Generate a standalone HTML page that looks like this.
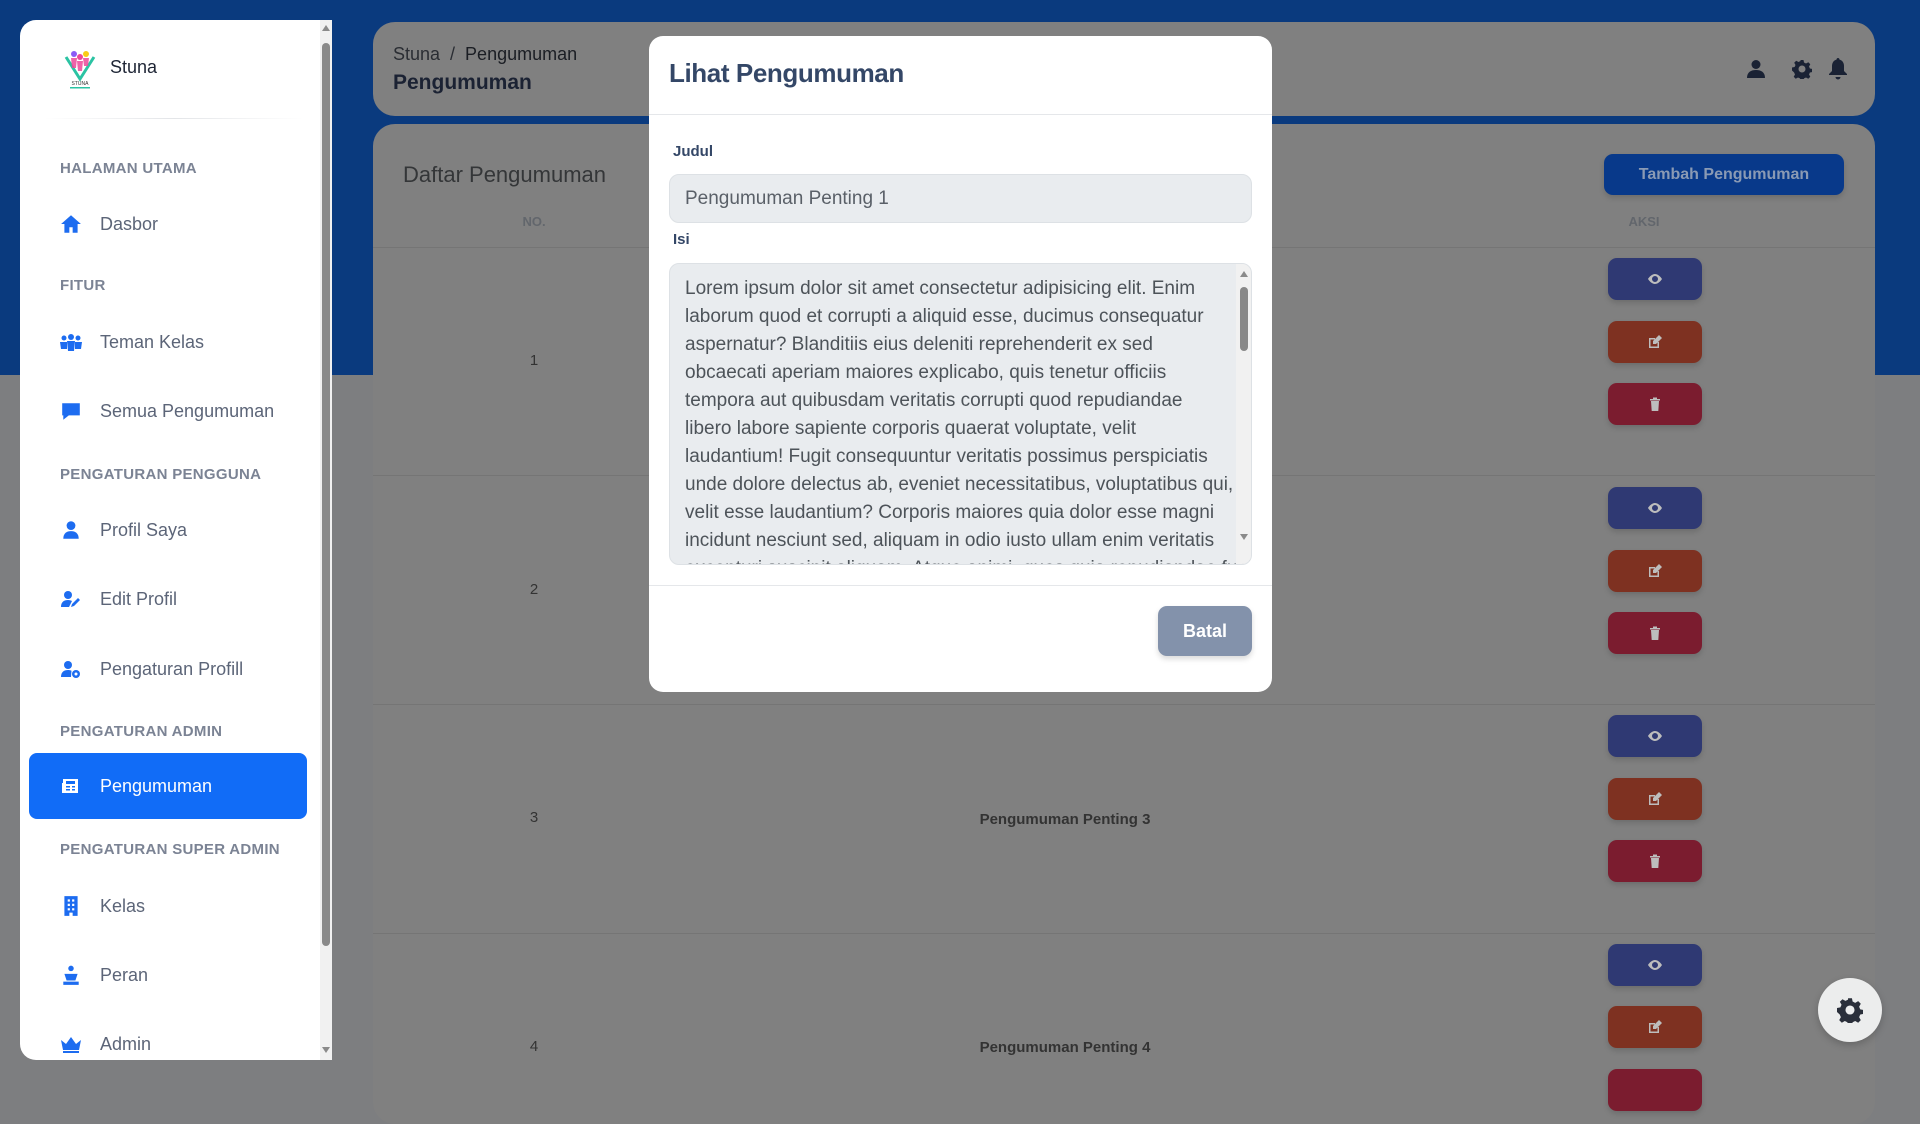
<!DOCTYPE html>
<html><head><meta charset="utf-8"><style>
*{box-sizing:border-box;margin:0;padding:0}
body{width:1920px;height:1080px;overflow:hidden;background:#7d7e80;font-family:"Liberation Sans",sans-serif;position:relative}
.band{position:absolute;left:0;top:0;width:1920px;height:375px;background:#0a3a7e}
.sb{position:absolute;left:20px;top:20px;width:312px;height:1040px;background:#fff;border-radius:16px 0 0 16px;overflow:hidden}
.sb .lab{position:absolute;left:40px;font-size:15px;font-weight:bold;color:#7b8394;letter-spacing:.3px}
.sb .it{position:absolute;left:40px;font-size:18px;color:#5c6578;display:flex;align-items:center}
.sb .it svg{width:22px;height:22px;margin-right:18px;fill:#1d6cf0}
.scroll{position:absolute;left:300px;top:0;width:12px;height:1040px;background:#f1f1f1}
.thumb{position:absolute;left:302px;top:23px;width:8px;height:903px;background:#8a8a8a;border-radius:4px}
.card{position:absolute;left:373px;width:1502px;background:#808080;border-radius:22px}
.ab{position:absolute;left:1608px;width:94px;height:42px;border-radius:9px;display:flex;align-items:center;justify-content:center;box-shadow:0 3px 6px rgba(0,0,0,.15)}
.ab svg{width:16px;height:16px;fill:#bdbdbd}
.num{position:absolute;left:524px;width:20px;text-align:center;font-size:15px;color:#333}
.ttl{position:absolute;left:900px;width:330px;text-align:center;font-size:15px;font-weight:bold;color:#333}
.sep{position:absolute;left:373px;width:1502px;height:1px;background:#757575}
.modal{position:absolute;left:649px;top:36px;width:623px;height:656px;background:#fff;border-radius:14px;overflow:hidden}
</style></head><body>
<div class="band"></div>

<div class="card" style="top:22px;height:94px">
 <div style="position:absolute;left:20px;top:22px;font-size:18px;color:#2a2d33">Stuna &nbsp;/&nbsp; <span style="color:#1b1e24">Pengumuman</span></div>
 <div style="position:absolute;left:20px;top:49px;font-size:21px;font-weight:bold;color:#1b2233">Pengumuman</div>
 <svg style="position:absolute;left:1373px;top:37px" width="20" height="20" viewBox="0 0 20 20" fill="#1a2234"><circle cx="10" cy="5.5" r="4.5"/><path d="M1 19c0-6 4-8 9-8s9 2 9 8z"/></svg>
 <svg style="position:absolute;left:1419px;top:37px" width="20" height="20" viewBox="0 0 20 20" fill="#1a2234"><path d="M8.5 1h3l.5 2.5 2 1 2.3-1.3 2 2-1.3 2.3.9 2 2.6.5v3l-2.6.5-.9 2 1.3 2.3-2 2-2.3-1.3-2 .9-.5 2.6h-3l-.5-2.6-2-.9-2.3 1.3-2-2 1.3-2.3-.9-2L0 11.5v-3l2.6-.5.9-2-1.3-2.3 2-2 2.3 1.3 2-1zM10 6.5a3.5 3.5 0 100 7 3.5 3.5 0 000-7z"/></svg>
 <svg style="position:absolute;left:1456px;top:36px" width="18" height="22" viewBox="0 0 18 22" fill="#1a2234"><path d="M9 0c1 0 1.5.7 1.5 1.6C13.5 2.3 15 5 15 8v5l3 3v1H0v-1l3-3V8c0-3 1.5-5.7 4.5-6.4C7.5.7 8 0 9 0zM6.5 19h5a2.5 2.5 0 01-5 0z"/></svg>
</div>

<div class="card" style="top:124px;height:1000px">
 <div style="position:absolute;left:30px;top:38px;font-size:22px;color:#343638">Daftar Pengumuman</div>
 <div style="position:absolute;left:1231px;top:30px;width:240px;height:41px;background:#08398a;border-radius:9px;color:#8a9ab4;font-weight:bold;font-size:16px;display:flex;align-items:center;justify-content:center;box-shadow:0 3px 6px rgba(0,0,0,.15)">Tambah Pengumuman</div>
 <div style="position:absolute;left:131px;top:90px;width:60px;text-align:center;font-size:13px;font-weight:bold;color:#62666c">NO.</div>
 <div style="position:absolute;left:1241px;top:90px;width:60px;text-align:center;font-size:13px;font-weight:bold;color:#62666c">AKSI</div>
</div>
<div class="sep" style="top:247px"></div>
<div class="sep" style="top:475px"></div>
<div class="sep" style="top:704px"></div>
<div class="sep" style="top:933px"></div>

<div class="num" style="top:352px">1</div>
<div class="num" style="top:581px">2</div>
<div class="num" style="top:809px">3</div>
<div class="num" style="top:1038px">4</div>
<div class="ttl" style="top:811px">Pengumuman Penting 3</div>
<div class="ttl" style="top:1039px">Pengumuman Penting 4</div>

<div class="ab" style="top:258px;background:#2f3973"><svg viewBox="0 0 16 16"><path d="M8 3C4 3 1 8 1 8s3 5 7 5 7-5 7-5-3-5-7-5zm0 8a3 3 0 110-6 3 3 0 010 6z"/></svg></div>
<div class="ab" style="top:321px;background:#7e3121"><svg viewBox="0 0 16 16"><path d="M2 4h6v1.5H3.5v7h7V8H12v6H2zM12 1l3 3-6 6H6V7z"/></svg></div>
<div class="ab" style="top:383px;background:#7b1c2f"><svg viewBox="0 0 16 16"><path d="M3 3h10v1.5H3zM6 1.5h4V3H6zM4 5h8l-.7 10H4.7z"/></svg></div>
<div class="ab" style="top:487px;background:#2f3973"><svg viewBox="0 0 16 16"><path d="M8 3C4 3 1 8 1 8s3 5 7 5 7-5 7-5-3-5-7-5zm0 8a3 3 0 110-6 3 3 0 010 6z"/></svg></div>
<div class="ab" style="top:550px;background:#7e3121"><svg viewBox="0 0 16 16"><path d="M2 4h6v1.5H3.5v7h7V8H12v6H2zM12 1l3 3-6 6H6V7z"/></svg></div>
<div class="ab" style="top:612px;background:#7b1c2f"><svg viewBox="0 0 16 16"><path d="M3 3h10v1.5H3zM6 1.5h4V3H6zM4 5h8l-.7 10H4.7z"/></svg></div>
<div class="ab" style="top:715px;background:#2f3973"><svg viewBox="0 0 16 16"><path d="M8 3C4 3 1 8 1 8s3 5 7 5 7-5 7-5-3-5-7-5zm0 8a3 3 0 110-6 3 3 0 010 6z"/></svg></div>
<div class="ab" style="top:778px;background:#7e3121"><svg viewBox="0 0 16 16"><path d="M2 4h6v1.5H3.5v7h7V8H12v6H2zM12 1l3 3-6 6H6V7z"/></svg></div>
<div class="ab" style="top:840px;background:#7b1c2f"><svg viewBox="0 0 16 16"><path d="M3 3h10v1.5H3zM6 1.5h4V3H6zM4 5h8l-.7 10H4.7z"/></svg></div>
<div class="ab" style="top:944px;background:#2f3973"><svg viewBox="0 0 16 16"><path d="M8 3C4 3 1 8 1 8s3 5 7 5 7-5 7-5-3-5-7-5zm0 8a3 3 0 110-6 3 3 0 010 6z"/></svg></div>
<div class="ab" style="top:1006px;background:#7e3121"><svg viewBox="0 0 16 16"><path d="M2 4h6v1.5H3.5v7h7V8H12v6H2zM12 1l3 3-6 6H6V7z"/></svg></div>
<div class="ab" style="top:1069px;background:#7b1c2f"></div>

<div class="sb">
 <svg style="position:absolute;left:44px;top:29px" width="32" height="40" viewBox="0 0 32 40"><path d="M2 8l14 22 14-22" fill="none" stroke="#2bc3a3" stroke-width="3"/><circle cx="10" cy="5" r="3" fill="#8b5cf6"/><circle cx="22" cy="5" r="3" fill="#facc15"/><circle cx="16" cy="8" r="3" fill="#ec4899"/><path d="M7 9h6l-1 10H8zM19 9h6l-1 8h-4zM13 12h6l-1 10h-4z" fill="#ec4899" opacity=".85"/><text x="16" y="36" font-size="5" text-anchor="middle" fill="#333" font-family="Liberation Sans">STUNA</text><rect x="6" y="38" width="20" height="1.5" fill="#2bc3a3"/></svg>
 <div style="position:absolute;left:90px;top:37px;font-size:18px;color:#1e2535">Stuna</div>
 <div style="position:absolute;left:24px;top:98px;width:260px;height:1px;background:linear-gradient(90deg,transparent,#e3e5e8,transparent)"></div>
 <div class="lab" style="top:140px">HALAMAN UTAMA</div>
 <div class="it" style="top:193px"><svg viewBox="0 0 20 20"><path d="M10 2l9 8h-3v8h-4.5v-5h-3v5H4v-8H1z"/></svg>Dasbor</div>
 <div class="lab" style="top:257px">FITUR</div>
 <div class="it" style="top:311px"><svg viewBox="0 0 22 20"><circle cx="4" cy="6" r="2.5"/><circle cx="11" cy="5" r="3"/><circle cx="18" cy="6" r="2.5"/><path d="M0 10h7v7H1zM15 10h7l-1 7h-6zM7 9h8l-1 10H8z"/></svg>Teman Kelas</div>
 <div class="it" style="top:380px"><svg viewBox="0 0 20 20"><path d="M2 3h16v11H8l-5 4v-4H2z"/></svg>Semua Pengumuman</div>
 <div class="lab" style="top:446px">PENGATURAN PENGGUNA</div>
 <div class="it" style="top:499px"><svg viewBox="0 0 20 20"><circle cx="10" cy="6" r="4"/><path d="M3 18c0-5 3-7 7-7s7 2 7 7z"/></svg>Profil Saya</div>
 <div class="it" style="top:568px"><svg viewBox="0 0 22 20"><circle cx="8" cy="6" r="4"/><path d="M1 18c0-5 3-7 7-7 2 0 3 .5 4 1l-3 6zM11 18l1-3 6-6 2 2-6 6z"/></svg>Edit Profil</div>
 <div class="it" style="top:638px"><svg viewBox="0 0 22 20"><circle cx="8" cy="6" r="4"/><path d="M1 18c0-5 3-7 7-7 1.5 0 2.5.3 3.5.7L11 18z"/><circle cx="16" cy="15" r="4"/><circle cx="16" cy="15" r="1.5" fill="#fff"/></svg>Pengaturan Profill</div>
 <div class="lab" style="top:703px">PENGATURAN ADMIN</div>
 <div style="position:absolute;left:9px;top:733px;width:278px;height:66px;background:#116cf7;border-radius:8px;display:flex;align-items:center;padding-left:31px;color:#fff;font-size:18px">
  <svg viewBox="0 0 20 20" width="20" height="20" style="margin-right:20px" fill="#fff"><path d="M3 3h15v14H2V7h1zm3 2v3h9V5zm0 5v1.5h4V10zm6 0v1.5h3V10zm-6 3v1.5h4V13zm6 0v1.5h3V13z"/></svg>Pengumuman</div>
 <div class="lab" style="top:821px">PENGATURAN SUPER ADMIN</div>
 <div class="it" style="top:875px"><svg viewBox="0 0 20 20"><path d="M4 1h12v18h-4.5v-3h-3v3H4zm3 3v2h2V4zm4 0v2h2V4zM7 8v2h2V8zm4 0v2h2V8zm-4 4v2h2v-2zm4 0v2h2v-2z"/></svg>Kelas</div>
 <div class="it" style="top:944px"><svg viewBox="0 0 20 20"><circle cx="10" cy="4" r="2.5"/><path d="M4 9h12l-2 6H6zM3 16h14v3H3z"/></svg>Peran</div>
 <div class="it" style="top:1013px"><svg viewBox="0 0 22 20"><path d="M1 6l5 4 5-7 5 7 5-4-2 10H3zM3 17h16v2H3z"/></svg>Admin</div>
 <div class="scroll"></div>
 <div class="thumb"></div>
 <div style="position:absolute;left:302px;top:5px;width:0;height:0;border-left:4px solid transparent;border-right:4px solid transparent;border-bottom:6px solid #8a8a8a"></div>
 <div style="position:absolute;left:302px;top:1027px;width:0;height:0;border-left:4px solid transparent;border-right:4px solid transparent;border-top:6px solid #8a8a8a"></div>
</div>

<div class="modal">
 <div style="position:absolute;left:20px;top:22px;font-size:26px;font-weight:bold;color:#344767;letter-spacing:-.4px">Lihat Pengumuman</div>
 <div style="position:absolute;left:0;top:78px;width:623px;height:1px;background:#e5e7ea"></div>
 <div style="position:absolute;left:24px;top:107px;font-size:15px;font-weight:bold;color:#344767">Judul</div>
 <div style="position:absolute;left:20px;top:138px;width:583px;height:49px;background:#e9ecef;border:1px solid #dde1e5;border-radius:10px;padding:0 15px;display:flex;align-items:center;font-size:19px;color:#5a6068">Pengumuman Penting 1</div>
 <div style="position:absolute;left:24px;top:195px;font-size:15px;font-weight:bold;color:#344767">Isi</div>
 <div style="position:absolute;left:20px;top:227px;width:583px;height:302px;background:#e9ecef;border:1px solid #dde1e5;border-radius:10px;overflow:hidden">
  <div style="position:absolute;left:15px;top:11px;white-space:nowrap;font-size:19px;line-height:28px;color:#4d5359">Lorem ipsum dolor sit amet consectetur adipisicing elit. Enim<br>laborum quod et corrupti a aliquid esse, ducimus consequatur<br>aspernatur? Blanditiis eius deleniti reprehenderit ex sed<br>obcaecati aperiam maiores explicabo, quis tenetur officiis<br>tempora aut quibusdam veritatis corrupti quod repudiandae<br>libero labore sapiente corporis quaerat voluptate, velit<br>laudantium! Fugit consequuntur veritatis possimus perspiciatis<br>unde dolore delectus ab, eveniet necessitatibus, voluptatibus qui,<br>velit esse laudantium? Corporis maiores quia dolor esse magni<br>incidunt nesciunt sed, aliquam in odio iusto ullam enim veritatis<br>excepturi suscipit aliquam. Atque animi, quos quia repudiandae fugit</div>
  <div style="position:absolute;right:0;top:0;width:15px;height:300px;background:#f1f1f1"></div>
  <div style="position:absolute;right:3px;top:23px;width:8px;height:64px;background:#888;border-radius:4px"></div>
  <div style="position:absolute;right:3px;top:7px;border-left:4px solid transparent;border-right:4px solid transparent;border-bottom:6px solid #8a8a8a"></div>
  <div style="position:absolute;right:3px;top:270px;border-left:4px solid transparent;border-right:4px solid transparent;border-top:6px solid #8a8a8a"></div>
 </div>
 <div style="position:absolute;left:0;top:549px;width:623px;height:1px;background:#e5e7ea"></div>
 <div style="position:absolute;left:509px;top:570px;width:94px;height:50px;background:#8392ab;border-radius:9px;color:#fff;font-weight:bold;font-size:18px;display:flex;align-items:center;justify-content:center;box-shadow:0 3px 6px rgba(0,0,0,.15)">Batal</div>
</div>

<div style="position:absolute;left:1818px;top:978px;width:64px;height:64px;border-radius:50%;background:#eceded;box-shadow:0 3px 8px rgba(0,0,0,.2);display:flex;align-items:center;justify-content:center">
 <svg width="26" height="26" viewBox="0 0 20 20" fill="#2a2f3a"><path d="M8.5 1h3l.5 2.5 2 1 2.3-1.3 2 2-1.3 2.3.9 2 2.6.5v3l-2.6.5-.9 2 1.3 2.3-2 2-2.3-1.3-2 .9-.5 2.6h-3l-.5-2.6-2-.9-2.3 1.3-2-2 1.3-2.3-.9-2L0 11.5v-3l2.6-.5.9-2-1.3-2.3 2-2 2.3 1.3 2-1zM10 6.5a3.5 3.5 0 100 7 3.5 3.5 0 000-7z"/></svg>
</div>
</body></html>
